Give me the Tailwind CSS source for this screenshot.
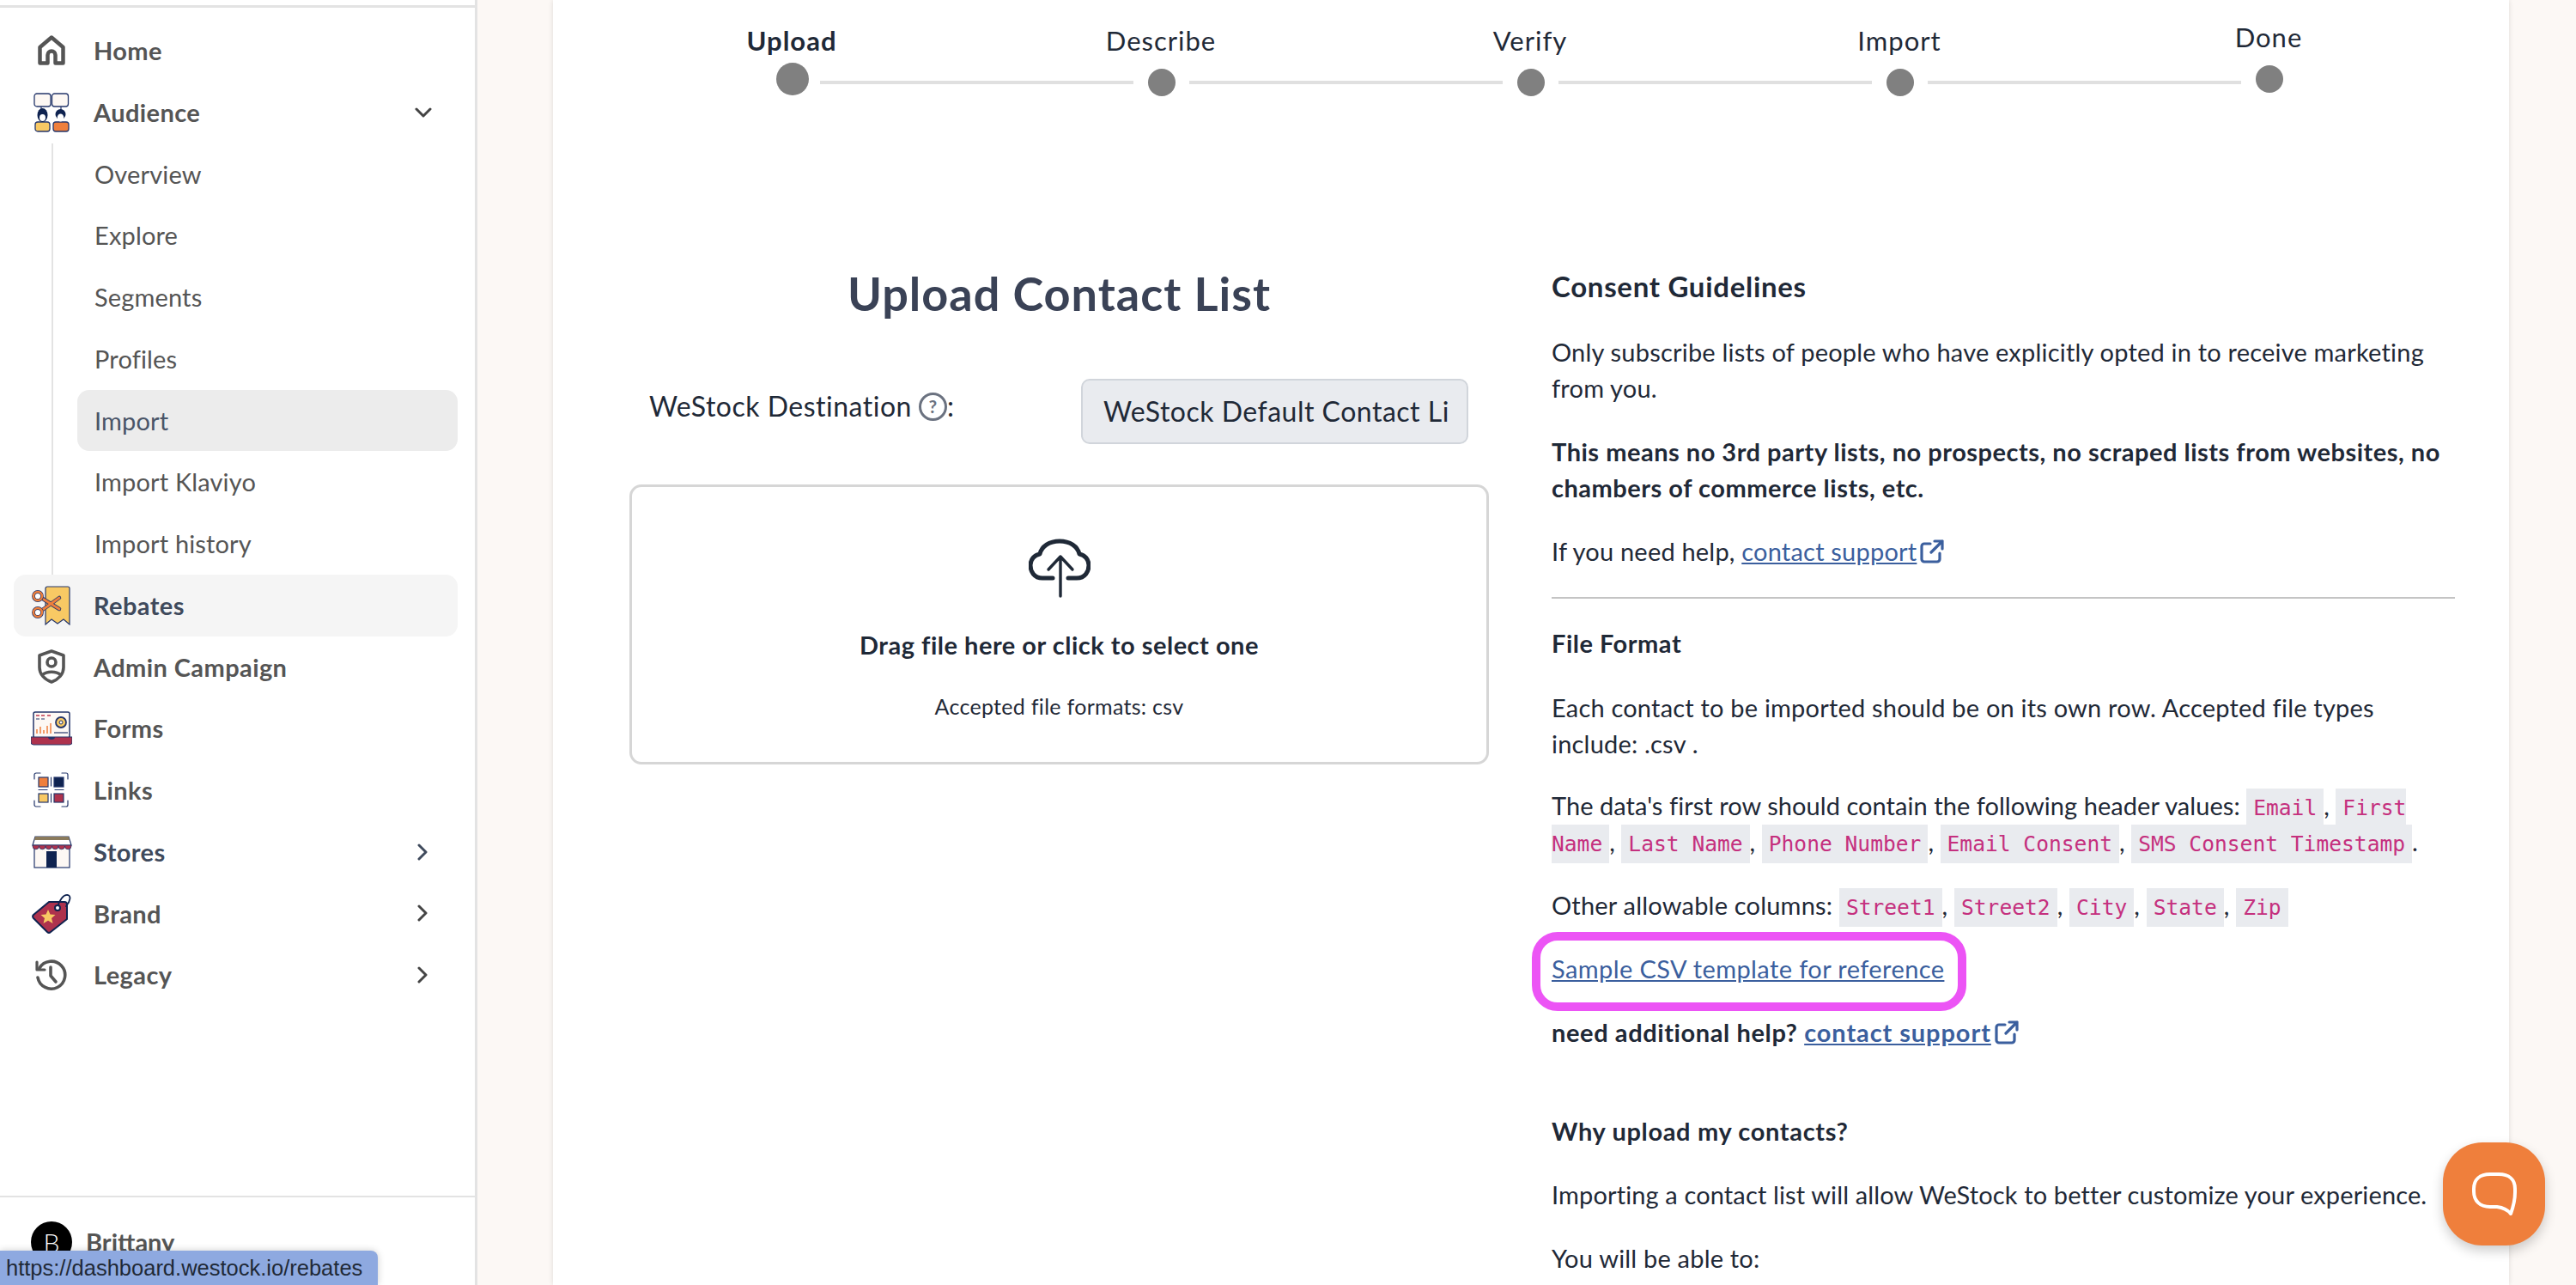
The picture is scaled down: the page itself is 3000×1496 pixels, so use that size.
<!DOCTYPE html>
<html lang="en">
<head>
  <meta charset="UTF-8"/>
  <meta name="viewport" content="width=device-width, initial-scale=1.0"/>
  <title>Import - WeStock</title>
  <script src="https://cdn.jsdelivr.net/npm/@tailwindcss/browser@4"></script>
</head>
<body class="bg-[#fcf8f5] font-[Lato,sans-serif] h-[1496px] overflow-hidden">

<div class="flex h-[1496px] relative overflow-hidden">

  <!-- sidebar -->
  <aside class="w-[556px] h-[1496px] shrink-0 bg-white border-r-[3px] border-[#e3e3e3] flex flex-col">
    <div class="h-[9px] shrink-0 border-b-[3px] border-[#e3e3e3]"></div>
    <nav class="pt-[14px] text-[29px] font-bold tracking-[0.4px] text-[#555555]">

      <a class="flex items-center h-[71.75px] pl-[44px]">
        <svg class="w-[32px] h-[35px] shrink-0" viewBox="0 0 32 35" fill="none" stroke="#555555" stroke-width="4.5" stroke-linejoin="round"><path d="M2.5 32.5V14L16 2.5 29.5 14V32.5H20.5V23a4.5 4.5 0 0 0-9 0v9.500z"/></svg>
        <span class="ml-[33px]">Home</span>
      </a>

      <a class="flex items-center h-[71.75px] pl-[39px] pr-[50px]">
        <svg class="w-[42px] h-[46px] shrink-0" viewBox="0 0 42 46">
          <g stroke="#24366b" stroke-width="1.300">
            <rect x="1" y="1" width="19" height="15" rx="3" fill="#fdf8f4"/>
            <rect x="21.500" y="1" width="19" height="15" rx="3" fill="#fdf8f4"/>
            <rect x="2" y="34" width="17" height="11" rx="3" fill="#f8c964"/>
            <rect x="23" y="34" width="18" height="11" rx="3" fill="#ef7f3c"/>
          </g>
          <path d="M9 16v4M32 16v4" stroke="#24366b" stroke-width="1.200"/>
          <ellipse cx="10.500" cy="26" rx="6" ry="8" fill="#0f2350"/>
          <ellipse cx="10.500" cy="29" rx="3.500" ry="4" fill="#fff"/>
          <circle cx="31.500" cy="25" r="6" fill="#0f2350"/>
          <ellipse cx="31.500" cy="29" rx="3.800" ry="4.500" fill="#fff"/>
        </svg>
        <span class="ml-[28px]">Audience</span>
        <svg class="w-[20px] h-[12px] ml-auto" viewBox="0 0 20 12" fill="none" stroke="#444444" stroke-width="3" stroke-linecap="round" stroke-linejoin="round"><path d="M2 2l8 8 8-8"/></svg>
      </a>

      <div class="ml-[60px] mr-[20px] border-l-[2px] border-[#e3e3e3] text-[29px] font-normal tracking-[0.15px]">
        <a class="flex items-center h-[71.75px] ml-[28px] pl-[20px]">Overview</a>
        <a class="flex items-center h-[71.75px] ml-[28px] pl-[20px]">Explore</a>
        <a class="flex items-center h-[71.75px] ml-[28px] pl-[20px]">Segments</a>
        <a class="flex items-center h-[71.75px] ml-[28px] pl-[20px]">Profiles</a>
        <a class="flex items-center h-[71.75px] ml-[28px] pl-[20px] bg-[#ececec] rounded-[14px] text-[#4a5568]">Import</a>
        <a class="flex items-center h-[71.75px] ml-[28px] pl-[20px]">Import Klaviyo</a>
        <a class="flex items-center h-[71.75px] ml-[28px] pl-[20px]">Import history</a>
      </div>

      <a class="flex items-center h-[71.75px] mx-[16px] w-[517px] pl-[21px] bg-[#f5f5f5] rounded-[14px] text-[#3f4a5c]">
        <svg class="w-[46px] h-[46px] shrink-0" viewBox="0 0 46 46">
          <path d="M16 3a2 2 0 0 1 2-2h24a2 2 0 0 1 2 2v42l-7-6-7 5-7-5-7 6z" fill="#f8c964" stroke="#24366b" stroke-width="1.200"/>
          <g fill="none" stroke="#24366b" stroke-width="4.500" stroke-linecap="round"><path d="M11 14l21 13M11 29l21-15"/></g>
          <g fill="none" stroke="#ef7f3c" stroke-width="2.800" stroke-linecap="round"><path d="M11 14l21 13M11 29l21-15"/></g>
          <circle cx="7" cy="12" r="5" fill="#fff" stroke="#24366b" stroke-width="3.800"/>
          <circle cx="7" cy="31" r="5" fill="#fff" stroke="#24366b" stroke-width="3.800"/>
          <circle cx="7" cy="12" r="5" fill="none" stroke="#ef7f3c" stroke-width="2.400"/>
          <circle cx="7" cy="31" r="5" fill="none" stroke="#ef7f3c" stroke-width="2.400"/>
        </svg>
        <span class="ml-[26px]">Rebates</span>
      </a>

      <a class="flex items-center h-[71.75px] pl-[44px]">
        <svg class="w-[32px] h-[40px] shrink-0" viewBox="0 0 32 40" fill="none" stroke="#555555" stroke-width="3.600" stroke-linejoin="round"><path d="M16 2L30 7V21C30 29 24 35 16 38 8 35 2 29 2 21V7z"/><circle cx="16" cy="15" r="5"/><path d="M5 30C11 25 21 25 27 30"/></svg>
        <span class="ml-[33px]">Admin Campaign</span>
      </a>

      <a class="flex items-center h-[71.75px] pl-[36px]">
        <svg class="w-[48px] h-[40px] shrink-0" viewBox="0 0 48 40">
          <rect x="3" y="1" width="42" height="30" rx="2" fill="#fdf8f4" stroke="#24366b" stroke-width="1.500"/>
          <path d="M6 5h4M12 5h4M19 5h4" stroke="#c0394f" stroke-width="1.300"/>
          <path d="M6 9h4M12 9h4" stroke="#24366b" stroke-width="1"/>
          <path d="M7 26v-5M11 26v-8M15 26v-4M19 26v-9M23 26v-12" stroke="#ef7f3c" stroke-width="1.500"/>
          <circle cx="35" cy="13" r="6" fill="#f8c964" stroke="#24366b" stroke-width="1.800"/>
          <circle cx="35" cy="13" r="2" fill="#fdf8f4" stroke="#24366b" stroke-width="1"/>
          <path d="M27 25h16" stroke="#24366b" stroke-width="1.200"/>
          <path d="M0 30h48v6a3 3 0 0 1-3 3H3a3 3 0 0 1-3-3z" fill="#ae324d" stroke="#24366b" stroke-width="1"/>
          <path d="M20 30h8a4 3 0 0 1-8 0z" fill="#24366b"/>
        </svg>
        <span class="ml-[25px]">Forms</span>
      </a>

      <a class="flex items-center h-[71.75px] pl-[39px]">
        <svg class="w-[41px] h-[41px] shrink-0" viewBox="0 0 41 41">
          <g fill="none" stroke="#24366b" stroke-width="1.200" stroke-linecap="round">
            <path d="M8 1H3a2 2 0 0 0-2 2v5M33 1h5a2 2 0 0 1 2 2v5M8 40H3a2 2 0 0 1-2-2v-5M33 40h5a2 2 0 0 0 2-2v-5"/>
            <path d="M20.500 6v10M20.500 25v10M6 20.500h10M25 20.500h10"/>
          </g>
          <g stroke="#24366b" stroke-width="1.200">
            <rect x="6" y="6" width="11" height="11" fill="#ef7f3c"/>
            <rect x="24" y="6" width="11" height="11" fill="#0f2350"/>
            <rect x="6" y="25" width="11" height="10" fill="#f8c964"/>
            <rect x="24" y="25" width="11" height="10" fill="#ae324d"/>
          </g>
        </svg>
        <span class="ml-[29px]">Links</span>
      </a>

      <a class="flex items-center h-[71.75px] pl-[37px] pr-[55px] text-[#3f4a5c]">
        <svg class="w-[47px] h-[38px] shrink-0" viewBox="0 0 47 38">
          <rect x="3" y="9" width="41" height="28" fill="#fdf8f4" stroke="#24366b" stroke-width="1.200"/>
          <path d="M4 1h39l3 10H1z" fill="#fff" stroke="#24366b" stroke-width="1.200"/>
          <path d="M4 1h39l1 4H3z" fill="#8a7a5c"/>
          <path d="M1 11h45v1a3.500 3.500 0 0 1-7.500 0 3.500 3.500 0 0 1-7.500 0 3.500 3.500 0 0 1-7.500 0 3.500 3.500 0 0 1-7.500 0 3.500 3.500 0 0 1-7.500 0 3.500 3.500 0 0 1-7.500 0z" fill="#ae324d" stroke="#24366b" stroke-width="0.800"/>
          <rect x="17" y="18" width="12" height="19" fill="#0f2350"/>
        </svg>
        <span class="ml-[25px]">Stores</span>
        <svg class="w-[12px] h-[20px] ml-auto" viewBox="0 0 12 20" fill="none" stroke="#3f4a5c" stroke-width="3" stroke-linecap="round" stroke-linejoin="round"><path d="M2 2l8 8-8 8"/></svg>
      </a>

      <a class="flex items-center h-[71.75px] pl-[37px] pr-[55px]">
        <svg class="w-[46px] h-[47px] shrink-0" viewBox="0 0 46 47">
          <path d="M20 10h18a3 3 0 0 1 3 3v17L22 45a3 3 0 0 1-4 0L2 29a3 3 0 0 1 0-4z" fill="#ae324d" stroke="#0f2350" stroke-width="2" stroke-linejoin="round"/>
          <path d="M30 16C32 8 37 1 42 2c4 1 3 7-2 13" fill="none" stroke="#0f2350" stroke-width="1.800" stroke-linecap="round"/>
          <circle cx="30" cy="17" r="3" fill="#fff" stroke="#0f2350" stroke-width="2"/>
          <path d="M19 19l2.500 5.500 6 .5-4.500 4 1.500 6-5.500-3.200-5.500 3.200 1.500-6-4.500-4 6-.5z" fill="#f8c964"/>
        </svg>
        <span class="ml-[26px]">Brand</span>
        <svg class="w-[12px] h-[20px] ml-auto" viewBox="0 0 12 20" fill="none" stroke="#444444" stroke-width="3" stroke-linecap="round" stroke-linejoin="round"><path d="M2 2l8 8-8 8"/></svg>
      </a>

      <a class="flex items-center h-[71.75px] pl-[41px] pr-[55px]">
        <svg class="w-[37px] h-[37px] shrink-0" viewBox="0 0 37 37" fill="none" stroke="#555555" stroke-width="3.600" stroke-linecap="round" stroke-linejoin="round"><path d="M5 10A16 16 0 1 1 3 21"/><path d="M2 3v9h9" stroke-width="3.200"/><path d="M18 9v10l6 7"/></svg>
        <span class="ml-[31px]">Legacy</span>
        <svg class="w-[12px] h-[20px] ml-auto" viewBox="0 0 12 20" fill="none" stroke="#444444" stroke-width="3" stroke-linecap="round" stroke-linejoin="round"><path d="M2 2l8 8-8 8"/></svg>
      </a>
    </nav>

    <div class="mt-auto h-[104px] shrink-0 border-t-[2px] border-[#e3e3e3] pt-[28px] pl-[36px] flex items-start gap-[16px]">
      <div class="w-[48px] h-[48px] rounded-full bg-black text-white flex items-center justify-center text-[30px] font-light">B</div>
      <span class="text-[29px] font-bold text-[#555555] leading-[48px]">Brittany</span>
    </div>
  </aside>

  <!-- main -->
  <main class="flex-1 pl-[88px]">
    <div class="w-[2278px] h-[1496px] bg-white shadow-[0_0_6px_rgba(0,0,0,0.12)] overflow-hidden">

      <!-- stepper -->
      <div class="pt-[28px] pl-[63px] grid grid-cols-[repeat(5,430px)] text-[31px] leading-[38px] text-center text-[#1f2937] tracking-[1px]">
        <div class="font-bold">Upload</div>
        <div>Describe</div>
        <div>Verify</div>
        <div>Import</div>
        <div class="-translate-y-1">Done</div>
      </div>
      <div class="mt-[7px] ml-[260px] h-[46px] flex items-center">
        <div class="w-[38px] h-[38px] rounded-full bg-[#808080] -mt-[8px]"></div>
        <div class="w-[365px] h-[4px] bg-[#e0e0e0] ml-[13px]"></div>
        <div class="w-[32px] h-[32px] rounded-full bg-[#808080] ml-[17px]"></div>
        <div class="w-[365px] h-[4px] bg-[#e0e0e0] ml-[16px]"></div>
        <div class="w-[32px] h-[32px] rounded-full bg-[#808080] ml-[17px]"></div>
        <div class="w-[365px] h-[4px] bg-[#e0e0e0] ml-[16px]"></div>
        <div class="w-[32px] h-[32px] rounded-full bg-[#808080] ml-[17px]"></div>
        <div class="w-[365px] h-[4px] bg-[#e0e0e0] ml-[16px]"></div>
        <div class="w-[32px] h-[32px] rounded-full bg-[#808080] ml-[17px] -mt-[8px]"></div>
      </div>

      <div class="mt-[195px] pl-[89px] flex items-start gap-[73px]">

        <!-- left column -->
        <section class="w-[1001px] shrink-0">
          <h1 class="text-[54px] leading-[56px] font-bold text-center text-[#3a4256] tracking-[1px]">Upload Contact List</h1>
          <div class="mt-[71px] flex items-start">
            <div class="pl-[23px] w-[526px] flex items-center h-[40px] mt-[12px] text-[32px] text-[#1f2937] tracking-[0.5px]">
              <span>WeStock Destination</span>
              <span class="ml-[8px] w-[33px] h-[33px] rounded-full border-[3px] border-[#6b7280] text-[#6b7280] flex items-center justify-center text-[21px] font-bold tracking-normal">?</span>
              <span>:</span>
            </div>
            <div class="w-[451px] h-[76px] bg-[#e9ebef] border-[2px] border-[#d1d5db] rounded-[10px] pl-[24px] pr-[22px] flex items-center">
              <span class="block overflow-hidden whitespace-nowrap text-[32px] text-[#1f2937] tracking-[0.5px]">WeStock Default Contact List</span>
            </div>
          </div>
          <div class="mt-[47px] h-[326px] border-[3px] border-[#d6d6d6] rounded-[14px] pt-[60px] flex flex-col items-center text-[#1f2937]">
            <svg class="w-[72px] h-[69px]" viewBox="0 0 72 69" fill="none" stroke="#1f2937" stroke-linecap="round" stroke-linejoin="round">
              <path stroke-width="5" d="M28 46H16C6 46 2 38 2 31 2 24 7 19 13 18 15 9 24 3 36 3 48 3 57 9 59 18 65 19 70 24 70 31 70 38 66 46 56 46H46"/>
              <path stroke-width="3.400" d="M37 67V21M23 36L37 21 51 36"/>
            </svg>
            <p class="mt-[35px] text-[29px] leading-[40px] font-bold tracking-[0.5px]">Drag file here or click to select one</p>
            <p class="mt-[33px] text-[25px] leading-[36px] tracking-[0.3px]">Accepted file formats: csv</p>
          </div>
        </section>

        <!-- right column -->
        <section class="w-[1052px] shrink-0 -mt-[2px] text-[29px] leading-[42px] tracking-[0.2px] text-[#1f2937]">
          <h3 class="font-bold text-[33px] tracking-[0.7px]">Consent Guidelines</h3>
          <p class="mt-[35px]">Only subscribe lists of people who have explicitly opted in to receive marketing from you.</p>
          <p class="mt-[32px] font-bold tracking-[0.5px]">This means no 3rd party lists, no prospects, no scraped lists from websites, no chambers of commerce lists, etc.</p>
          <p class="mt-[32px]">If you need help, <a class="text-[#3b5f9e] underline">contact support<svg class="inline-block w-[28px] h-[28px] ml-[4px] align-[-3px]" viewBox="0 0 28 28" fill="none" stroke="#3b5f9e" stroke-width="3.200" stroke-linecap="round" stroke-linejoin="round"><path d="M12 5H5a3 3 0 0 0-3 3v15a3 3 0 0 0 3 3h15a3 3 0 0 0 3-3v-7M13 15L26 2M17 2h9v9"/></svg></a></p>
          <hr class="mt-[32px] border-t-[2px] border-[#c4c4c4]"/>

          <h4 class="mt-[31px] font-bold tracking-[0.5px]">File Format</h4>
          <p class="mt-[33px]">Each contact to be imported should be on its own row. Accepted file types include: .csv .</p>
          <p class="mt-[30px] tracking-[0.05px]">The data's first row should contain the following header values: <code class="font-['DejaVu_Sans_Mono',monospace] text-[24.6px] leading-none tracking-normal text-[#c5307e] bg-[#e9ebef] px-[8px] py-[8px]">Email</code>, <code class="font-['DejaVu_Sans_Mono',monospace] text-[24.6px] leading-none tracking-normal text-[#c5307e] bg-[#e9ebef] px-[8px] py-[8px]">First Name</code>, <code class="font-['DejaVu_Sans_Mono',monospace] text-[24.6px] leading-none tracking-normal text-[#c5307e] bg-[#e9ebef] px-[8px] py-[8px]">Last Name</code>, <code class="font-['DejaVu_Sans_Mono',monospace] text-[24.6px] leading-none tracking-normal text-[#c5307e] bg-[#e9ebef] px-[8px] py-[8px]">Phone Number</code>, <code class="font-['DejaVu_Sans_Mono',monospace] text-[24.6px] leading-none tracking-normal text-[#c5307e] bg-[#e9ebef] px-[8px] py-[8px]">Email Consent</code>, <code class="font-['DejaVu_Sans_Mono',monospace] text-[24.6px] leading-none tracking-normal text-[#c5307e] bg-[#e9ebef] px-[8px] py-[8px]">SMS Consent Timestamp</code>.</p>
          <p class="mt-[32px]">Other allowable columns: <code class="font-['DejaVu_Sans_Mono',monospace] text-[24.6px] leading-none tracking-normal text-[#c5307e] bg-[#e9ebef] px-[8px] py-[8px]">Street1</code>, <code class="font-['DejaVu_Sans_Mono',monospace] text-[24.6px] leading-none tracking-normal text-[#c5307e] bg-[#e9ebef] px-[8px] py-[8px]">Street2</code>, <code class="font-['DejaVu_Sans_Mono',monospace] text-[24.6px] leading-none tracking-normal text-[#c5307e] bg-[#e9ebef] px-[8px] py-[8px]">City</code>, <code class="font-['DejaVu_Sans_Mono',monospace] text-[24.6px] leading-none tracking-normal text-[#c5307e] bg-[#e9ebef] px-[8px] py-[8px]">State</code>, <code class="font-['DejaVu_Sans_Mono',monospace] text-[24.6px] leading-none tracking-normal text-[#c5307e] bg-[#e9ebef] px-[8px] py-[8px]">Zip</code></p>
          <p class="mt-[32px] relative w-fit"><a class="text-[#3b5f9e] underline tracking-[0.4px]">Sample CSV template for reference</a>
            <span class="absolute left-[-23px] top-[-22px] w-[506px] h-[92px] border-[10px] border-[#ec54f5] rounded-[30px]"></span>
          </p>
          <p class="mt-[32px] font-bold tracking-[0.6px]">need additional help? <a class="text-[#3b5f9e] underline tracking-[0.9px]">contact support<svg class="inline-block w-[28px] h-[28px] ml-[4px] align-[-3px]" viewBox="0 0 28 28" fill="none" stroke="#3b5f9e" stroke-width="3.200" stroke-linecap="round" stroke-linejoin="round"><path d="M12 5H5a3 3 0 0 0-3 3v15a3 3 0 0 0 3 3h15a3 3 0 0 0 3-3v-7M13 15L26 2M17 2h9v9"/></svg></a></p>

          <h4 class="mt-[73px] font-bold tracking-[0.65px]">Why upload my contacts?</h4>
          <p class="mt-[32px] tracking-[0.13px]">Importing a contact list will allow WeStock to better customize your experience.</p>
          <p class="mt-[32px]">You will be able to:</p>
        </section>
      </div>
    </div>
  </main>

  <!-- browser link preview, overlays sidebar footer -->
  <div class="absolute left-0 bottom-0 w-[440px] h-[40px] bg-[#8ea9e0] rounded-tr-[8px] pl-[7px] font-['Liberation_Sans',sans-serif] text-[25.5px] leading-[40px] text-[#1f2937] whitespace-nowrap shadow-[0_0_8px_rgba(0,0,0,0.2)]">https://dashboard.westock.io/rebates</div>

  <!-- chat launcher -->
  <div class="absolute left-[2845px] top-[1330px] w-[119px] h-[120px] rounded-[46px] bg-[#ef7f3c] shadow-[0_6px_14px_rgba(0,0,0,0.2)] flex items-center justify-center">
    <svg class="w-[54px] h-[52px]" viewBox="0 0 54 52" fill="none" stroke="#ffffff" stroke-width="4" stroke-linejoin="round"><path d="M22 3H32C44 3 51 9 51 20V24C51 32 50 38 46 49 42 44 38 42 30 41H22C10 41 3 34 3 23V20C3 9 10 3 22 3Z"/></svg>
  </div>
</div>

</body>
</html>
